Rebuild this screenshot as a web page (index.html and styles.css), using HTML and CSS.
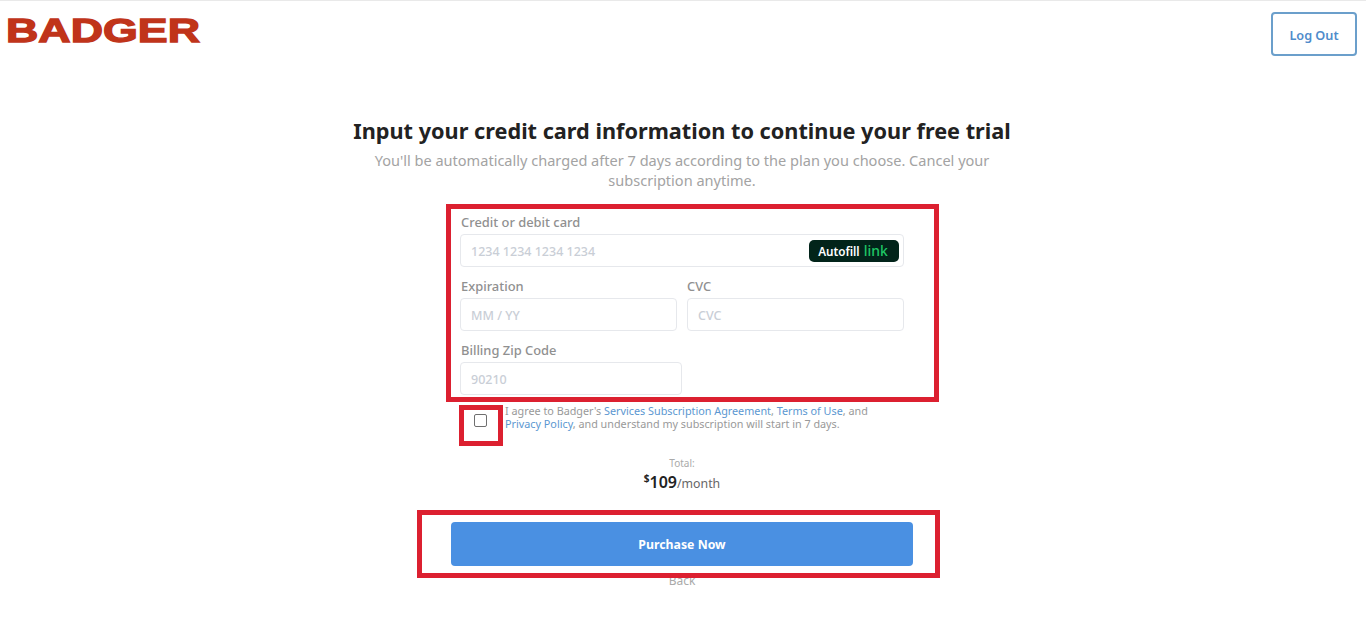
FILE: index.html
```html
<!DOCTYPE html>
<html lang="en">
<head>
<meta charset="utf-8">
<title>Badger - Free trial</title>
<link rel="stylesheet" href="styles.css">
</head>
<body>
<header class="topbar">
  <svg class="logo" viewBox="0 0 196 30" width="196" height="30" role="img" aria-label="BADGER">
    <text class="logo-text" x="0" y="26.5" textLength="194" lengthAdjust="spacingAndGlyphs">BADGER</text>
  </svg>
  <a class="logout" href="#">Log Out</a>
</header>
<main class="content">
  <h1 class="title">Input your credit card information to continue your free trial</h1>
  <p class="subtitle">You'll be automatically charged after 7 days according to the plan you choose. Cancel your subscription anytime.</p>
  <form class="card-form">
    <div class="field">
      <div class="label">Credit or debit card</div>
      <div class="input input-card"><span class="placeholder">1234 1234 1234 1234</span>
        <span class="autofill">Autofill <b class="autofill-link">link</b></span>
      </div>
    </div>
    <div class="field-row">
      <div class="field">
        <div class="label">Expiration</div>
        <div class="input"><span class="placeholder">MM / YY</span></div>
      </div>
      <div class="field">
        <div class="label label-cvc">CVC</div>
        <div class="input"><span class="placeholder">CVC</span></div>
      </div>
    </div>
    <div class="field field-zip">
      <div class="label">Billing Zip Code</div>
      <div class="input"><span class="placeholder">90210</span></div>
    </div>
  </form>
  <div class="agree">
    <span class="checkbox"></span>
    <p class="agree-text">I agree to Badger's <a href="#">Services Subscription Agreement</a>, <a href="#">Terms of Use</a>, and <a href="#">Privacy Policy</a>, and understand my subscription will start in 7 days.</p>
  </div>
  <div class="total-label">Total:</div>
  <div class="total"><sup class="currency">$</sup><strong class="amount">109</strong><span class="period">/month</span></div>
  <button class="purchase" type="button">Purchase Now</button>
  <a class="back" href="#">Back</a>
</main>
<div class="mark mark-form"></div>
<div class="mark mark-check"></div>
<div class="mark mark-button"></div>
</body>
</html>
```
FILE: styles.css
```css
* { box-sizing: border-box; }
html, body { margin: 0; padding: 0; }
body {
  position: relative;
  height: 625px;
  overflow: hidden;
  background: #fff;
  border-top: 1px solid #e9e9e9;
  font-family: "Noto Sans", "Open Sans", sans-serif;
  color: #999;
}
a { text-decoration: none; }
.topbar {
  display: flex;
  justify-content: space-between;
  align-items: flex-start;
  padding: 11px 9px 0 6px;
  height: 94px;
}
.logo { margin-top: 3px; display: block; overflow: visible; }
.logo-text {
  font-family: "Liberation Sans", Arial, sans-serif;
  font-weight: 700;
  font-size: 33.5px;
  fill: #c0341a;
  stroke: #c0341a;
  stroke-width: 1.3px;
}
.logout {
  width: 86px;
  height: 44px;
  padding-top: 1px;
  display: flex;
  align-items: center;
  justify-content: center;
  border: 2px solid #6b9fcb;
  border-radius: 4px;
  color: #4f8ccb;
  font-size: 12.7px;
  font-weight: 600;
}
.content {
  width: 700px;
  margin-left: 332px;
  display: flex;
  flex-direction: column;
  align-items: center;
}
.title {
  margin: 22px 0 0;
  font-size: 21.7px;
  line-height: 28px;
  font-weight: 700;
  color: #222;
  white-space: nowrap;
}
.subtitle {
  width: 620px;
  margin: 5px 0 0;
  font-size: 14.55px;
  line-height: 20px;
  text-align: center;
  color: #a3a3a3;
}
.card-form {
  width: 444px;
  margin: 22px 0 0 0;
  display: flex;
  flex-direction: column;
  gap: 9px;
}
.field { flex: 1; min-width: 0; }
.field-row { display: flex; gap: 10px; }
.field-zip { width: 222px; flex: none; }
.label {
  height: 22px;
  padding-left: 1px;
  font-size: 12.9px;
  line-height: 21px;
  font-weight: 500;
  color: #909090;
}
.label-cvc { padding-left: 0; }
.input {
  height: 33px;
  border: 1px solid #e6e8ec;
  border-radius: 4px;
  padding: 0 4px 0 10px;
  display: flex;
  align-items: center;
  justify-content: space-between;
  font-size: 12.5px;
  font-weight: 500;
  color: #c9ced6;
}
.placeholder { padding-top: 1px; }
.autofill {
  width: 90px;
  height: 22px;
  padding-right: 2px;
  border-radius: 5px;
  background: #02241a;
  color: #fff;
  display: flex;
  align-items: center;
  justify-content: center;
  gap: 1px;
  font-size: 11.7px;
  font-weight: 600;
  white-space: pre;
}
.autofill-link {
  color: #1fc765;
  font-weight: 500;
  font-size: 14px;
}
.agree {
  width: 444px;
  margin: 9px 0 0 0;
  display: flex;
  align-items: flex-start;
}
.checkbox {
  width: 13px;
  height: 13px;
  margin: 10px 18px 0 14px;
  flex: none;
  border: 1px solid #6f6f6f;
  border-radius: 2px;
  background: #fff;
}
.agree-text {
  width: 375px;
  margin: 0;
  font-size: 10.8px;
  line-height: 13px;
  color: #999;
}
.agree-text a { color: #5b97d1; }
.total-label {
  margin-top: 26px;
  font-size: 10px;
  line-height: 14px;
  color: #aaa;
}
.total {
  display: flex;
  align-items: baseline;
  height: 22px;
  margin-top: 1px;
  color: #222;
}
.currency {
  font-size: 10px;
  font-weight: 700;
  line-height: 10px;
  align-self: flex-start;
  margin-top: 2px;
}
.amount { font-size: 16px; line-height: 22px; font-weight: 600; }
.period { font-size: 12.3px; color: #666; }
.purchase {
  width: 462px;
  height: 44px;
  margin-top: 29px;
  border: 0;
  border-radius: 4px;
  background: #4a90e2;
  color: #fff;
  font-family: inherit;
  font-size: 12.3px;
  font-weight: 700;
}
.back {
  margin-top: 7px;
  font-size: 12px;
  line-height: 16px;
  color: #aaa;
}
.mark {
  position: absolute;
  border: 5px solid #dc2030;
  pointer-events: none;
}
.mark-form { left: 446px; top: 203px; width: 493px; height: 198px; }
.mark-check { left: 459px; top: 404px; width: 44px; height: 41px; }
.mark-button { left: 417px; top: 509px; width: 523px; height: 68px; }
```
